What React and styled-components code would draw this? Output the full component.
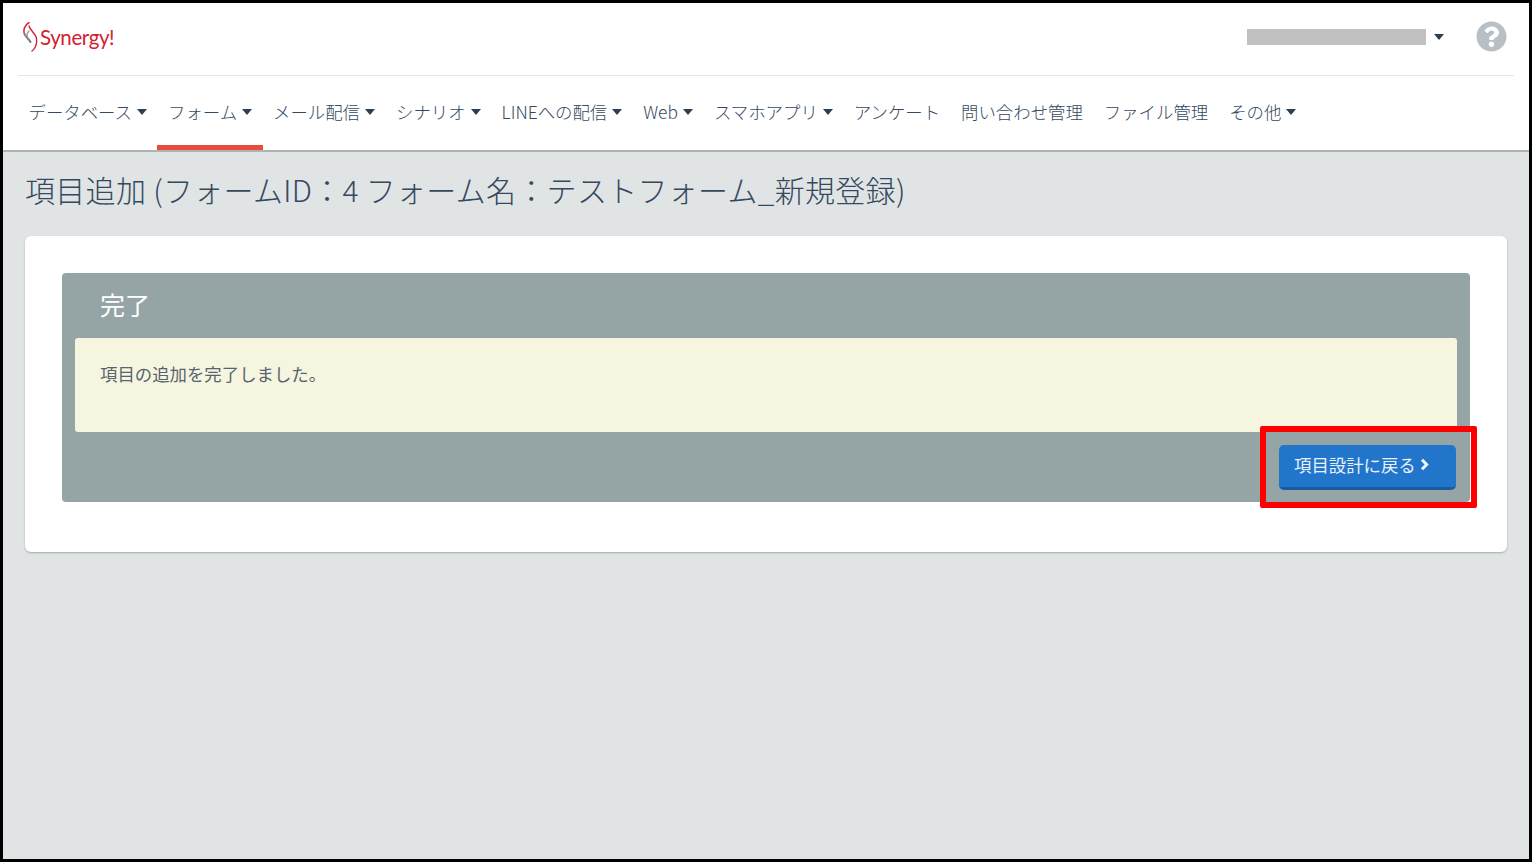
import styled, { createGlobalStyle } from "styled-components";
import { FaQuestionCircle } from "react-icons/fa";

const GlobalStyle = createGlobalStyle`
    * {
        box-sizing: border-box;
    }
    body {
        margin: 0;
        font-family: "Noto Sans CJK JP", "Noto Sans", sans-serif;
        color: #34495e;
        background: #000;
    }
`;

const Frame = styled.div`
    height: 862px;
    border: 3px solid #000;
    background: #e0e4e5;
    overflow: hidden;
`;

const Header = styled.header`
    background: #fff;
    height: 149px;
    border-bottom: 2px solid #b0b3b4;
`;

const TopRow = styled.div`
    height: 73px;
    margin: 0 15px;
    padding: 0 7px 4px 5px;
    border-bottom: 1px solid #e3e5e6;
    display: flex;
    align-items: center;
    justify-content: space-between;
`;

const Logo = styled.div`
    display: flex;
    align-items: center;
    color: #d0232f;
    font-family: "Lato", sans-serif;
    font-size: 20.5px;
    line-height: 30px;
    letter-spacing: -0.4px;
`;

const UserArea = styled.div`
    display: flex;
    align-items: center;
`;

const UserBar = styled.div`
    width: 179px;
    height: 16px;
    background: #c0c0c0;
    margin-right: 8px;
`;

const Caret = styled.span`
    display: inline-block;
    width: 0;
    height: 0;
    margin-left: ${(p) => p.$gap || 0}px;
    border-left: 5.5px solid transparent;
    border-right: 5.5px solid transparent;
    border-top: 6px solid #2c3e50;
`;

const HelpIcon = styled(FaQuestionCircle)`
    width: 31px;
    height: 31px;
    margin: 0 0 2px 32px;
    color: #b8c0c6;
`;

const Nav = styled.nav`
    display: flex;
    height: 74px;
    padding-left: 15px;
`;

const NavItem = styled.div`
    height: 74px;
    padding: 2px 10.5px ${(p) => (p.$active ? 0 : 5)}px;
    display: flex;
    align-items: center;
    font-size: 17.4px;
    font-weight: 300;
    white-space: nowrap;
    color: #34495e;
    border-bottom: ${(p) => (p.$active ? "5px solid #e74c3c" : "none")};
`;

const Main = styled.main`
    padding: 0 22px;
`;

const Title = styled.h1`
    margin: 0;
    height: 84px;
    padding: 0 0 10px 0;
    display: flex;
    align-items: center;
    font-size: 30px;
    font-weight: 300;
    letter-spacing: 0.3px;
    white-space: pre;
    color: #34495e;
`;

const Card = styled.section`
    background: #fff;
    border-radius: 6px;
    padding: 37px 37px 50px;
    box-shadow: 0 1px 2px rgba(0, 0, 0, 0.25);
`;

const Panel = styled.div`
    background: #95a5a6;
    border-radius: 4px;
    padding: 0 13px 12px;
`;

const PanelTitle = styled.h2`
    margin: 0;
    height: 65px;
    padding: 0 0 4px 25px;
    display: flex;
    align-items: center;
    font-size: 25px;
    font-weight: 400;
    color: #fff;
`;

const Message = styled.div`
    background: #f6f5e0;
    border-radius: 3px;
    height: 94px;
    padding: 24px 25px 0;
    font-size: 17.4px;
    line-height: 24px;
    color: #55646f;
`;

const Actions = styled.div`
    display: flex;
    justify-content: flex-end;
    padding: 13px 1px 0 0;
`;

const ButtonWrap = styled.div`
    position: relative;
`;

const BackButton = styled.button`
    display: flex;
    align-items: center;
    gap: 4px;
    width: 177px;
    height: 45px;
    padding: 0 0 4px 15px;
    background: #2176cc;
    color: #e8f1fa;
    border: none;
    border-bottom: 3px solid #1a5a9e;
    border-radius: 5px;
    font-family: inherit;
    font-size: 17.4px;
    font-weight: 400;
`;

const Highlight = styled.div`
    position: absolute;
    top: -19px;
    right: -21px;
    bottom: -18px;
    left: -19px;
    border: 6px solid #ff0000;
    border-radius: 2px;
    pointer-events: none;
`;

const menu = [
    { label: "データベース", caret: true },
    { label: "フォーム", caret: true, active: true },
    { label: "メール配信", caret: true },
    { label: "シナリオ", caret: true },
    { label: "LINEへの配信", caret: true },
    { label: "Web", caret: true },
    { label: "スマホアプリ", caret: true },
    { label: "アンケート" },
    { label: "問い合わせ管理" },
    { label: "ファイル管理" },
    { label: "その他", caret: true },
];

function LogoMark() {
    return (
        <svg width="17" height="30" viewBox="0 0 17 30" fill="none">
            <path d="M6 0.5 C1.5 3 0 8 1.5 12" stroke="#d0232f" strokeWidth="1.5" strokeLinecap="round" />
            <path d="M1.5 12 C2.5 15 6 17 7.5 20" stroke="#7d7d7d" strokeWidth="2" strokeLinecap="round" />
            <path d="M6 4 C7 8 12 11 13.5 16 C14.5 22 12 27 9 29" stroke="#d0232f" strokeWidth="1.4" strokeLinecap="round" />
            <path d="M6 9 C4 11 3.5 13 4.5 15" stroke="#999" strokeWidth="1.4" strokeLinecap="round" />
        </svg>
    );
}

function ChevronMark() {
    return (
        <svg width="9" height="13" viewBox="0 0 9 13" fill="none">
            <path d="M2 1.8 L6.6 6.5 L2 11.2" stroke="#f2f7fc" strokeWidth="3" />
        </svg>
    );
}

export default function App() {
    return (
        <Frame>
            <GlobalStyle />
            <Header>
                <TopRow>
                    <Logo>
                        <LogoMark />
                        Synergy!
                    </Logo>
                    <UserArea>
                        <UserBar />
                        <Caret />
                        <HelpIcon />
                    </UserArea>
                </TopRow>
                <Nav>
                    {menu.map((item) => (
                        <NavItem key={item.label} $active={item.active}>
                            {item.label}
                            {item.caret && <Caret $gap={5} />}
                        </NavItem>
                    ))}
                </Nav>
            </Header>
            <Main>
                <Title>項目追加 (フォームID：4 フォーム名：テストフォーム_新規登録)</Title>
                <Card>
                    <Panel>
                        <PanelTitle>完了</PanelTitle>
                        <Message>項目の追加を完了しました。</Message>
                        <Actions>
                            <ButtonWrap>
                                <BackButton>
                                    項目設計に戻る
                                    <ChevronMark />
                                </BackButton>
                                <Highlight />
                            </ButtonWrap>
                        </Actions>
                    </Panel>
                </Card>
            </Main>
        </Frame>
    );
}
